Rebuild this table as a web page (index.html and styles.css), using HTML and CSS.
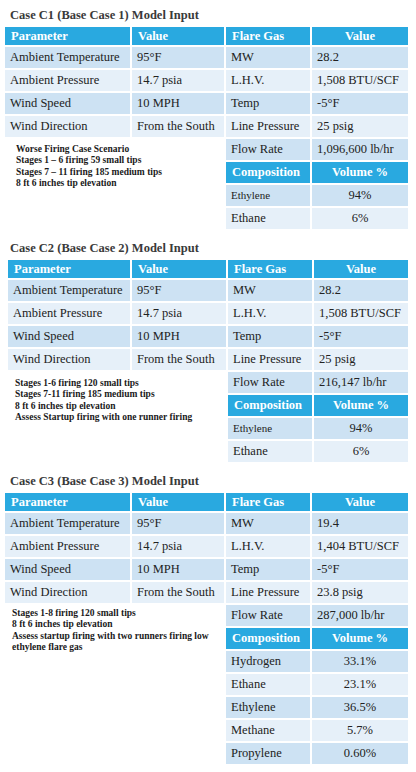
FILE: index.html
```html
<!DOCTYPE html>
<html lang="en">
<head>
<meta charset="utf-8">
<title>Model Input Cases</title>
<link rel="stylesheet" href="styles.css">
</head>
<body>
<section class="case">
  <h2 class="case-title">Case C1 (Base Case 1) Model Input</h2>
  <div class="case-row">
    <div class="col-left">
      <div class="grid grid-left">
        <div class="th">Parameter</div><div class="th">Value</div>
        <div class="td dark">Ambient Temperature</div><div class="td dark">95°F</div>
        <div class="td light">Ambient Pressure</div><div class="td light">14.7 psia</div>
        <div class="td dark">Wind Speed</div><div class="td dark">10 MPH</div>
        <div class="td light">Wind Direction</div><div class="td light">From the South</div>
      </div>
      <div class="notes notes-1">
        <div>Worse Firing Case Scenario</div>
        <div>Stages 1 – 6 firing 59 small tips</div>
        <div>Stages 7 – 11 firing 185 medium tips</div>
        <div>8 ft 6 inches tip elevation</div>
      </div>
    </div>
    <div class="grid grid-right">
      <div class="th">Flare Gas</div><div class="th center">Value</div>
      <div class="td dark">MW</div><div class="td dark">28.2</div>
      <div class="td light">L.H.V.</div><div class="td light">1,508 BTU/SCF</div>
      <div class="td dark">Temp</div><div class="td dark">-5°F</div>
      <div class="td light">Line Pressure</div><div class="td light">25 psig</div>
      <div class="td dark">Flow Rate</div><div class="td dark">1,096,600 lb/hr</div>
      <div class="th th-comp">Composition</div><div class="th th-comp center">Volume %</div>
      <div class="td dark small">Ethylene</div><div class="td dark center">94%</div>
      <div class="td light">Ethane</div><div class="td light center">6%</div>
    </div>
  </div>
</section>

<section class="case case-2">
  <h2 class="case-title">Case C2 (Base Case 2) Model Input</h2>
  <div class="case-row">
    <div class="col-left">
      <div class="grid grid-left">
        <div class="th">Parameter</div><div class="th">Value</div>
        <div class="td dark">Ambient Temperature</div><div class="td dark">95°F</div>
        <div class="td light">Ambient Pressure</div><div class="td light">14.7 psia</div>
        <div class="td dark">Wind Speed</div><div class="td dark">10 MPH</div>
        <div class="td light">Wind Direction</div><div class="td light">From the South</div>
      </div>
      <div class="notes notes-2">
        <div>Stages 1-6 firing 120 small tips</div>
        <div>Stages 7-11 firing 185 medium tips</div>
        <div>8 ft 6 inches tip elevation</div>
        <div>Assess Startup firing with one runner firing</div>
      </div>
    </div>
    <div class="grid grid-right">
      <div class="th">Flare Gas</div><div class="th center">Value</div>
      <div class="td dark">MW</div><div class="td dark">28.2</div>
      <div class="td light">L.H.V.</div><div class="td light">1,508 BTU/SCF</div>
      <div class="td dark">Temp</div><div class="td dark">-5°F</div>
      <div class="td light">Line Pressure</div><div class="td light">25 psig</div>
      <div class="td dark">Flow Rate</div><div class="td dark">216,147 lb/hr</div>
      <div class="th th-comp">Composition</div><div class="th th-comp center">Volume %</div>
      <div class="td dark small">Ethylene</div><div class="td dark center">94%</div>
      <div class="td light">Ethane</div><div class="td light center">6%</div>
    </div>
  </div>
</section>

<section class="case">
  <h2 class="case-title">Case C3 (Base Case 3) Model Input</h2>
  <div class="case-row">
    <div class="col-left">
      <div class="grid grid-left">
        <div class="th">Parameter</div><div class="th">Value</div>
        <div class="td dark">Ambient Temperature</div><div class="td dark">95°F</div>
        <div class="td light">Ambient Pressure</div><div class="td light">14.7 psia</div>
        <div class="td dark">Wind Speed</div><div class="td dark">10 MPH</div>
        <div class="td light">Wind Direction</div><div class="td light">From the South</div>
      </div>
      <div class="notes notes-3">
        <div>Stages 1-8 firing 120 small tips</div>
        <div>8 ft 6 inches tip elevation</div>
        <div>Assess startup firing with two runners firing low ethylene flare gas</div>
      </div>
    </div>
    <div class="grid grid-right">
      <div class="th">Flare Gas</div><div class="th center">Value</div>
      <div class="td dark">MW</div><div class="td dark">19.4</div>
      <div class="td light">L.H.V.</div><div class="td light">1,404 BTU/SCF</div>
      <div class="td dark">Temp</div><div class="td dark">-5°F</div>
      <div class="td light">Line Pressure</div><div class="td light">23.8 psig</div>
      <div class="td dark">Flow Rate</div><div class="td dark">287,000 lb/hr</div>
      <div class="th th-comp">Composition</div><div class="th th-comp center">Volume %</div>
      <div class="td dark">Hydrogen</div><div class="td dark center">33.1%</div>
      <div class="td light">Ethane</div><div class="td light center">23.1%</div>
      <div class="td dark">Ethylene</div><div class="td dark center">36.5%</div>
      <div class="td light">Methane</div><div class="td light center">5.7%</div>
      <div class="td dark">Propylene</div><div class="td dark center">0.60%</div>
    </div>
  </div>
</section>
</body>
</html>
```

FILE: styles.css
```css
* { box-sizing: border-box; }

html, body {
  margin: 0;
  background: #ffffff;
}

body {
  padding-top: 7px;
  font-family: "Liberation Serif", "Times New Roman", serif;
  color: #222222;
}

.case {
  padding-left: 5px;
}

.case + .case {
  margin-top: 11px;
}

.case-title {
  margin: 0 0 4px 5px;
  font-size: 12.5px;
  line-height: 16px;
  font-weight: bold;
  color: #3a3a3a;
}

.case-row {
  display: flex;
  align-items: flex-start;
  gap: 2px;
}

.grid {
  display: grid;
  gap: 2px;
}

.grid-left {
  grid-template-columns: 125px 92px;
}

.grid-right {
  grid-template-columns: 84px 96px;
}

.case-2 .case-row {
  padding-left: 3px;
}

.case-2 .grid-left {
  grid-template-columns: 122px 94px;
}

.case-2 .grid-right {
  grid-template-columns: 84px 94px;
}

.th {
  background: #29a9e0;
  color: #ffffff;
  font-weight: bold;
  font-size: 12.5px;
  height: 18px;
  line-height: 18px;
  padding-left: 6px;
  white-space: nowrap;
}

.th-comp {
  height: 21px;
  line-height: 21px;
}

.td {
  font-size: 12.5px;
  height: 21px;
  line-height: 21px;
  padding-left: 5px;
  white-space: nowrap;
  overflow: hidden;
}

.dark {
  background: #cde2f3;
}

.light {
  background: #e6f0f9;
}

.center {
  text-align: center;
  padding-left: 0;
}

.small {
  font-size: 11px;
}

.notes {
  font-weight: bold;
  font-size: 9.5px;
  line-height: 11.3px;
  color: #1a1a1a;
  width: 215px;
}

.notes-1 {
  margin-top: 7px;
  padding-left: 11px;
}

.notes-2 {
  margin-top: 8px;
  padding-left: 7px;
}

.notes-3 {
  margin-top: 5px;
  padding-left: 7px;
}
```
